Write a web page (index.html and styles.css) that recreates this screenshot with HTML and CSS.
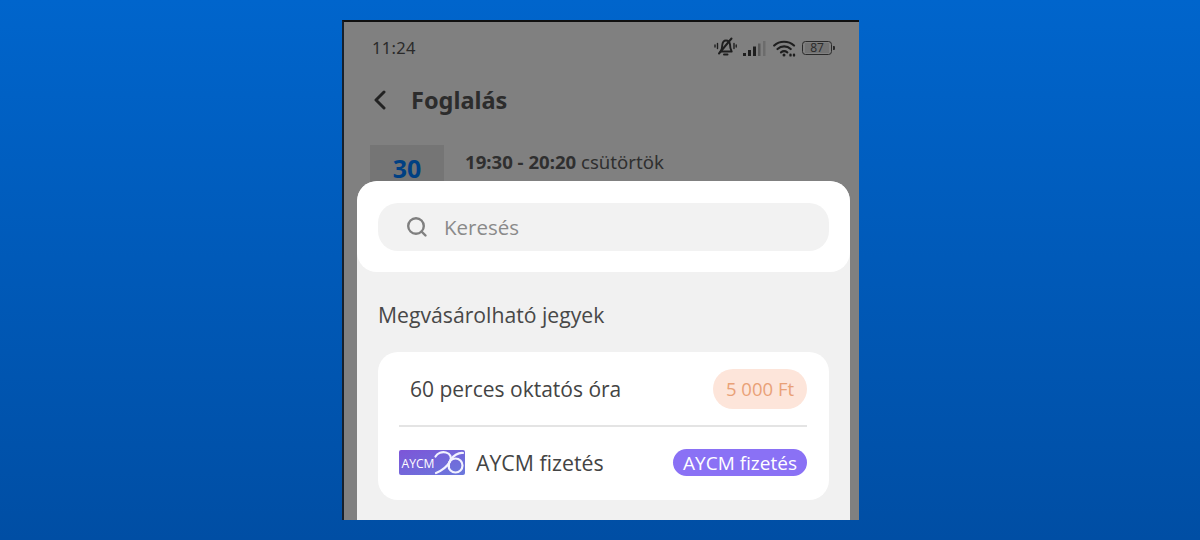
FILE: index.html
```html
<!DOCTYPE html>
<html lang="hu">
<head>
<meta charset="utf-8">
<title>Foglalás</title>
<link rel="stylesheet" href="styles.css">
</head>
<body>
<main class="phone">
  <div class="status">
    <span class="clock">11:24</span>
    <div class="status-icons">
      <svg class="ic-bell" width="23" height="20" viewBox="0 0 23 20" fill="none" stroke="#1e1e1e" stroke-width="1.900" stroke-linecap="round" stroke-linejoin="round">
        <path d="M6.500 14.500c1.500-1.500 1.500-3.500 1.700-6C8.500 5.500 10 3.500 12 3.500c2.200 0 3.700 1.800 4 4l.4 3.500 1.300 3.500H6.500z"/>
        <path d="M10 17.500h3.500" stroke-width="2"/>
        <path d="M5 16.500 17.500 1.500" stroke-width="2"/>
        <path d="M3.500 6.500v5M1 8v2M20 6.500v5M22.200 8v2" stroke-width="1.400"/>
      </svg>
      <svg class="ic-signal" width="23" height="17" viewBox="0 0 23 17">
        <rect x="0" y="13" width="3" height="3" fill="#1e1e1e"/>
        <rect x="5" y="10" width="3" height="6" fill="#1e1e1e"/>
        <rect x="10" y="6.500" width="3" height="9.500" fill="#1e1e1e"/>
        <rect x="15" y="3.500" width="2.500" height="12.500" fill="#5a5a5a"/>
        <rect x="20" y="1" width="2.500" height="15" fill="#6c6c6c"/>
      </svg>
      <svg class="ic-wifi" width="23" height="17" viewBox="0 0 23 17" fill="none" stroke="#1e1e1e" stroke-width="2.200" stroke-linecap="round">
        <path d="M1.200 5.500C6.500 .5 15.500 .5 21 5.500"/>
        <path d="M4.500 9c3.800-3.400 9.500-3.400 13.200 0"/>
        <path d="M8 12.300c2-1.500 4.300-1.500 6.300 0"/>
        <circle cx="11" cy="15" r="1.500" fill="#1e1e1e" stroke="none"/>
        <path d="M17.500 14.800v.6M21 14.800v.6" stroke-width="2.400"/>
      </svg>
      <div class="battery">
        <div class="battery-body"><span class="battery-level">87</span></div>
        <span class="battery-tip"></span>
      </div>
    </div>
  </div>
  <header class="title-bar">
    <svg class="back" width="14" height="20" viewBox="0 0 14 20" fill="none" stroke="#222" stroke-width="3" stroke-linecap="round" stroke-linejoin="round"><path d="M11 2 3 10l8 8"/></svg>
    <h1 class="title">Foglalás</h1>
  </header>
  <section class="booking">
    <div class="date-tile"><span class="date-num">30</span></div>
    <p class="booking-time"><b>19:30 - 20:20</b> csütörtök</p>
  </section>

  <div class="sheet">
    <div class="search-panel">
      <div class="search">
        <svg class="search-ic" width="22" height="22" viewBox="0 0 22 22" fill="none" stroke="#808080" stroke-width="2.400" stroke-linecap="round"><circle cx="10" cy="10" r="7.800"/><path d="m15.500 15.500 4 4"/></svg>
        <span class="search-text">Keresés</span>
      </div>
    </div>
    <div class="sheet-body">
      <h2 class="section-title">Megvásárolható jegyek</h2>
      <div class="card">
        <div class="row row-ticket">
          <span class="row-name">60 perces oktatós óra</span>
          <span class="price">5 000 Ft</span>
        </div>
        <div class="divider"></div>
        <div class="row row-aycm">
          <svg class="logo" width="66" height="25" viewBox="0 0 66 25">
            <defs><linearGradient id="lg" x1="0" x2="1" y1="0" y2="1"><stop offset="0" stop-color="#7d55d8"/><stop offset="1" stop-color="#6a78dc"/></linearGradient></defs>
            <rect width="66" height="25" rx="2" fill="url(#lg)"/>
            <text x="2.500" y="18" class="logo-text" textLength="33" lengthAdjust="spacingAndGlyphs">AYCM</text>
            <g fill="none" stroke="#f2f2ff" stroke-width="2.200" stroke-linecap="round" stroke-linejoin="round">
              <path d="M36.500 6.500C38.500 3 43 1.500 47 2.500c4.500 1.200 6 5 4 9-2.500 4.500-8 9-14 11.500"/>
              <path d="M64 3C59 2.500 54 6 51.500 10c-1.500 2.500-2 5-1.500 7"/>
              <circle cx="56.500" cy="15.500" r="7"/>
            </g>
          </svg>
          <span class="row-name row-name-aycm">AYCM fizetés</span>
          <span class="pill">AYCM fizetés</span>
        </div>
      </div>
    </div>
  </div>
</main>
</body>
</html>
```
FILE: styles.css
```css
* { box-sizing: border-box; }
html, body { margin: 0; height: 100%; }
body {
  width: 1200px;
  height: 540px;
  overflow: hidden;
  padding-top: 20px;
  background: linear-gradient(180deg, #0065cc 0%, #004ea4 100%);
  font-family: "Open Sans", "Noto Sans", sans-serif;
  color: #333;
}
.phone {
  position: relative;
  width: 517px;
  height: 500px;
  margin-left: 342px;
  background: #808080;
  border-left: 2px solid #16202c;
  border-top: 2px solid #101010;
  overflow: hidden;
}
.status {
  display: flex;
  align-items: center;
  justify-content: space-between;
  height: 24px;
  margin-top: 13px;
  margin-bottom: 1px;
  padding: 0 24px 0 28px;
}
.clock { font-family: "Noto Sans", sans-serif; font-size: 16.500px; color: #2a2a2a; letter-spacing: .3px; }
.status-icons { display: flex; align-items: center; padding-top: 2px; }
.ic-bell { margin-right: 6px; margin-top: -2px; }
.ic-signal { margin-right: 7px; }
.ic-wifi { margin-right: 6px; }
.battery { display: flex; align-items: center; }
.battery-body {
  width: 30px;
  height: 14px;
  border: 1.500px solid #2a2a2a;
  border-radius: 3.500px;
  display: flex;
  align-items: center;
  justify-content: center;
}
.battery-level { font-size: 12px; line-height: 10px; color: #2a2a2a; background: #737373; width: 24px; text-align: center; }
.battery-tip { width: 2px; height: 4px; margin-left: 1px; background: #2a2a2a; border-radius: 0 1px 1px 0; }
.title-bar {
  display: flex;
  align-items: center;
  margin-top: 26px;
  padding-left: 29px;
  height: 30px;
}
.back { margin-right: 24px; }
.title { margin: 0; font-family: "Noto Sans", sans-serif; font-size: 23.500px; font-weight: 700; color: #2c2c2c; line-height: 30px; }
.booking { display: flex; margin-top: 30px; padding-left: 26px; }
.date-tile {
  width: 74px;
  height: 70px;
  background: #757575;
  text-align: center;
  padding-top: 6px;
}
.date-num { font-family: "Noto Sans", sans-serif; font-size: 25px; font-weight: 700; color: #004083; line-height: 34px; }
.booking-time { margin: 5px 0 0 21px; font-family: "Noto Sans", sans-serif; font-size: 18.600px; line-height: 24px; color: #2f2f2f; }
.booking-time b { font-weight: 700; }

.sheet {
  position: absolute;
  left: 13px;
  top: 159px;
  width: 493px;
  height: 340px;
  background: #f1f1f1;
  border-radius: 20px 20px 0 0;
  overflow: hidden;
}
.search-panel {
  height: 91px;
  padding: 22px 21px 0;
  background: #fff;
  border-radius: 20px;
}
.search {
  display: flex;
  align-items: center;
  height: 48px;
  padding-left: 28px;
  background: #f2f2f2;
  border-radius: 20px;
}
.search-ic { margin-right: 16px; }
.search-text { font-size: 20.500px; color: #8a8a8a; }
.sheet-body { padding: 28px 21px 0; }
.section-title { margin: 0 0 22px; font-size: 21.200px; font-weight: 400; line-height: 30px; color: #484848; }
.card {
  background: #fff;
  border-radius: 20px;
  padding: 0 22px 0 21px;
  height: 148px;
}
.row { display: flex; align-items: center; }
.row-name { font-size: 21px; color: #444; }
.row-name-aycm { font-size: 21.300px; }
.row-ticket { height: 73px; padding-left: 11px; justify-content: space-between; }
.price {
  display: flex;
  align-items: center;
  justify-content: center;
  width: 94px;
  height: 40px;
  background: #fde5da;
  border-radius: 20px;
  color: #e9a177;
  font-size: 18.500px;
}
.divider { height: 2px; background: #e4e4e4; }
.row-aycm { height: 71px; }
.logo { margin-right: 11px; flex: none; }
.logo-text { font-family: "Open Sans", sans-serif; font-size: 12px; fill: #fff; font-weight: 400; }
.pill {
  margin-left: auto;
  display: flex;
  align-items: center;
  justify-content: center;
  width: 134px;
  height: 27px;
  background: #8a71f5;
  border-radius: 14px;
  color: #fff;
  font-size: 19px;
}
```
